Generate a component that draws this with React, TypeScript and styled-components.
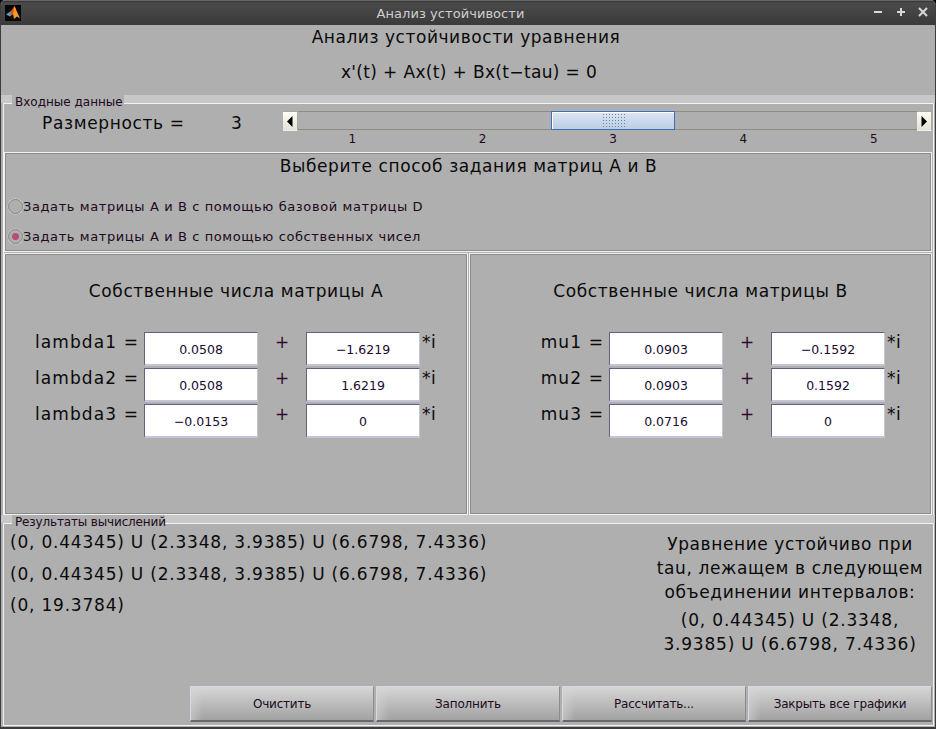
import styled, { createGlobalStyle } from "styled-components";

const GlobalStyle = createGlobalStyle`
  html, body {
    margin: 0;
    padding: 0;
    background: #000;
  }
  * {
    box-sizing: border-box;
  }
`;

const Window = styled.div`
  width: 936px;
  height: 729px;
  display: flex;
  flex-direction: column;
  overflow: hidden;
  background: #afafaf;
  border-radius: 5px 5px 0 0;
  font-family: "DejaVu Sans", Verdana, sans-serif;
  color: #0a0a0a;
  border-left: 1px solid #3c3c3c;
  border-right: 1px solid #3c3c3c;
  border-bottom: 2px solid #3c3c3c;
`;

const TitleBar = styled.div`
  height: 25px;
  flex: none;
  display: flex;
  align-items: center;
  justify-content: space-between;
  padding: 0 6px 0 4px;
  color: #cfcfcf;
  font-size: 13px;
  letter-spacing: 0.05px;
  background: linear-gradient(#333 0%, #4a4a4a 8%, #3a3a3a 100%);
  border-top: 1px solid #666;
`;

const TitleText = styled.span`
  flex: 1;
  text-align: center;
  margin-left: 10px;
`;

const TitleButtons = styled.div`
  display: flex;
  gap: 9px;
  margin-bottom: 3px;
`;

const Header = styled.div`
  height: 70px;
  flex: none;
  display: flex;
  flex-direction: column;
  align-items: center;
`;

const Title = styled.div`
  font-size: 17px;
  line-height: 22px;
  margin-top: 1px;
  margin-right: 4px;
  letter-spacing: 0.55px;
`;

const Formula = styled.div`
  font-size: 17px;
  line-height: 22px;
  margin-top: 13px;
  margin-left: 2px;
  letter-spacing: 0.35px;
`;

const Group = styled.div<{ $height: number }>`
  position: relative;
  height: ${({ $height }) => $height}px;
  flex: none;
  padding-top: 8px;
  background: linear-gradient(#c8c8c8 8px, transparent 8px);
`;

const Legend = styled.span<{ $width: number; $spacing: number }>`
  position: absolute;
  left: 11px;
  top: 0;
  z-index: 1;
  width: ${({ $width }) => $width}px;
  height: 14px;
  padding-left: 3px;
  background: #afafaf;
  font-size: 12px;
  line-height: 15px;
  color: #200a20;
  letter-spacing: ${({ $spacing }) => $spacing}px;
  white-space: nowrap;
`;

const GroupBody = styled.div`
  height: 100%;
  margin-left: 2px;
  margin-right: 1px;
  padding-right: 1px;
  border-top: 1px solid #f2f2f2;
  border-left: 1px solid #f2f2f2;
  border-right: 1px solid #f2f2f2;
  display: flex;
  flex-direction: column;
`;

const DimensionRow = styled.div`
  height: 48px;
  flex: none;
  display: flex;
`;

const DimLabel = styled.div`
  width: 142px;
  flex: none;
  margin-left: 38px;
  margin-top: 8px;
  font-size: 17px;
  line-height: 22px;
  letter-spacing: 0.65px;
  white-space: nowrap;
`;

const DimValue = styled.div`
  width: 52px;
  flex: none;
  margin-left: 47px;
  margin-top: 8px;
  font-size: 17px;
  line-height: 22px;
`;

const SliderColumn = styled.div`
  width: 649px;
  flex: none;
  margin-top: 7px;
`;

const Track = styled.div`
  height: 19px;
  display: flex;
  background: #afafaf;
  border-top: 1px solid #8d8d86;
  border-bottom: 1px solid #8d8d86;
`;

const ArrowButton = styled.div`
  width: 15px;
  margin: -1px 0 -2px;
  flex: none;
  display: flex;
  align-items: center;
  justify-content: center;
  background: linear-gradient(#fdfcf6, #e6e3d6);
  border-top: 1px solid #a9a9a2;
  border-right: 1px solid #a9a9a2;
  border-bottom: 1px solid #efefef;
`;

const TrackSpace = styled.div<{ $width: number }>`
  width: ${({ $width }) => $width}px;
  flex: none;
`;

const Thumb = styled.div`
  width: 124px;
  flex: none;
  margin: -1px 0;
  display: flex;
  align-items: center;
  justify-content: center;
  background: linear-gradient(#dce6f3, #bccde4);
  border: 1px solid #3a70b8;
  box-shadow: inset 1px 1px 0 #fff;
`;

const Grip = styled.div`
  width: 23px;
  height: 15px;
  background-image: radial-gradient(#6f83a5 0.8px, transparent 0.9px);
  background-size: 3px 3px;
`;

const Ticks = styled.div`
  display: grid;
  grid-template-columns: repeat(5, 130.4px);
  padding-left: 4px;
  margin-top: 2px;
  font-size: 12px;
  line-height: 15px;
  color: #200a20;
  text-align: center;
`;

const MethodFrame = styled.div`
  height: 100px;
  flex: none;
  margin: 0 0 1px;
  border: 1px solid #f2f2f2;
  box-shadow: inset 0 0 0 1px #8c8c8c;
  padding-top: 3px;
  display: flex;
  flex-direction: column;
`;

const MethodTitle = styled.div`
  font-size: 17px;
  line-height: 21px;
  text-align: center;
  letter-spacing: 0.58px;
  margin-left: 1px;
`;

const RadioRow = styled.div<{ $gap: number }>`
  display: flex;
  align-items: center;
  margin-top: ${({ $gap }) => $gap}px;
  margin-left: 3px;
  height: 16px;
  font-size: 13px;
  color: #200a20;
  letter-spacing: 0.6px;
`;

const Radio = styled.span<{ $checked?: boolean }>`
  width: 15px;
  height: 15px;
  flex: none;
  border-radius: 50%;
  border: 1px solid #8a8a8a;
  box-shadow: 0 0 0 0.5px #dcdcdc;
  display: flex;
  align-items: center;
  justify-content: center;

  &::after {
    content: "";
    width: 7px;
    height: 7px;
    border-radius: 50%;
    background: ${({ $checked }) => ($checked ? "#b84d78" : "transparent")};
  }
`;

const Panels = styled.div`
  height: 262px;
  flex: none;
  display: grid;
  grid-template-columns: 464px 463px;
  gap: 1px;
`;

const Panel = styled.div`
  border: 1px solid #f2f2f2;
  box-shadow: inset 0 0 0 1px #8c8c8c;
  display: flex;
  flex-direction: column;
`;

const PanelTitle = styled.div`
  margin-top: 26px;
  font-size: 17px;
  line-height: 22px;
  text-align: center;
  letter-spacing: 0.6px;
`;

const EigenRows = styled.div`
  margin-top: 30px;
  display: flex;
  flex-direction: column;
  gap: 2px;
`;

const EigenRow = styled.div`
  height: 34px;
  display: flex;
`;

const EigenLabel = styled.div`
  width: 139px;
  flex: none;
  padding-right: 5px;
  text-align: right;
  font-size: 17px;
  line-height: 20px;
  letter-spacing: 1.1px;
  white-space: nowrap;
`;

const ValueBox = styled.div`
  width: 114px;
  height: 34px;
  flex: none;
  display: flex;
  align-items: center;
  justify-content: center;
  padding-top: 1px;
  background: #fff;
  font-size: 12.5px;
  color: #200a30;
  border-top: 1px solid #62627a;
  border-left: 1px solid #62627a;
  border-right: 1px solid #c4c4d8;
  border-bottom: 2px solid #c4c4d8;
`;

const PlusSign = styled.div`
  width: 48px;
  flex: none;
  text-align: center;
  font-size: 17px;
  line-height: 20px;
  color: #300a30;
`;

const ImagUnit = styled.div`
  margin-left: 2px;
  font-size: 17px;
  line-height: 20px;
  letter-spacing: 0.6px;
`;

const ResultsBody = styled(GroupBody)`
  flex-direction: row;
  padding: 7px 3px 3px 6px;
  border-bottom: 1px solid #f2f2f2;
`;

const ResultColumn = styled.div`
  width: 639px;
  flex: none;
  display: flex;
  flex-direction: column;
  gap: 9.5px;
  font-size: 17px;
  line-height: 22px;
  letter-spacing: 0.79px;
`;

const Summary = styled.div`
  width: 280px;
  flex: none;
  margin-left: 1px;
  margin-top: 1px;
  text-align: center;
  font-size: 17px;
  line-height: 24px;
  letter-spacing: 0.6px;
  white-space: nowrap;
`;

const SummaryRange = styled.div`
  margin-top: 4px;
  letter-spacing: 0.8px;
`;

const ButtonBar = styled.div`
  position: absolute;
  right: 3px;
  bottom: 4px;
  display: flex;
  gap: 2px;
`;

const ActionButton = styled.button`
  width: 184px;
  height: 36px;
  padding: 0;
  font-family: inherit;
  font-size: 12px;
  letter-spacing: -0.2px;
  color: #200a20;
  background: linear-gradient(90deg, rgba(215, 215, 220, 0.5), transparent 12px),
    linear-gradient(#d6d6d6, #a2a2a2);
  border: 1px solid #8c8c8c;
  border-top-color: #d8d8e0;
  border-left-color: #d8d8e0;
  border-bottom: 2px solid #68686e;
`;

const Logo = () => (
  <svg width="16" height="16" viewBox="0 0 16 16">
    <rect width="16" height="16" fill="#050505" />
    <path d="M1 9.5 6 6 8 8 5 11.5z" fill="#4aa7c8" />
    <path d="M6 6 9.5 1 11 4 8.5 9 5 11.5z" fill="#d9541e" />
    <path d="M9.5 1 15 13.5 12 11.5 9 14 8 9z" fill="#f59a23" />
  </svg>
);

const MinimizeIcon = () => (
  <svg width="15" height="11" viewBox="0 0 15 11">
    <rect x="4" y="5" width="8" height="2" fill="#d8d8d8" />
  </svg>
);

const MaximizeIcon = () => (
  <svg width="14" height="11" viewBox="0 0 14 11">
    <path d="M3 5h3V2h2v3h3v2H8v3H6V7H3z" fill="#d8d8d8" />
  </svg>
);

const CloseIcon = () => (
  <svg width="12" height="11" viewBox="0 0 12 11">
    <path d="M2 2 10 10M10 2 2 10" stroke="#d8d8d8" strokeWidth="2" />
  </svg>
);

const ArrowIcon = ({ dir }: { dir: "left" | "right" }) => (
  <svg width="6" height="11" viewBox="0 0 6 11">
    <path d={dir === "left" ? "M5.5 0v11L0 5.5z" : "M.5 0v11L6 5.5z"} fill="#000" />
  </svg>
);

type Eigen = { name: string; re: string; im: string };

const lambdas: Eigen[] = [
  { name: "lambda1", re: "0.0508", im: "−1.6219" },
  { name: "lambda2", re: "0.0508", im: "1.6219" },
  { name: "lambda3", re: "−0.0153", im: "0" },
];

const mus: Eigen[] = [
  { name: "mu1", re: "0.0903", im: "−0.1592" },
  { name: "mu2", re: "0.0903", im: "0.1592" },
  { name: "mu3", re: "0.0716", im: "0" },
];

const EigenPanel = ({ title, rows }: { title: string; rows: Eigen[] }) => (
  <Panel>
    <PanelTitle>{title}</PanelTitle>
    <EigenRows>
      {rows.map((row) => (
        <EigenRow key={row.name}>
          <EigenLabel>{row.name} =</EigenLabel>
          <ValueBox>{row.re}</ValueBox>
          <PlusSign>+</PlusSign>
          <ValueBox>{row.im}</ValueBox>
          <ImagUnit>*i</ImagUnit>
        </EigenRow>
      ))}
    </EigenRows>
  </Panel>
);

const App = () => (
  <>
    <GlobalStyle />
    <Window>
      <TitleBar>
        <Logo />
        <TitleText>Анализ устойчивости</TitleText>
        <TitleButtons>
          <MinimizeIcon />
          <MaximizeIcon />
          <CloseIcon />
        </TitleButtons>
      </TitleBar>
      <Header>
        <Title>Анализ устойчивости уравнения</Title>
        <Formula>x'(t) + Ax(t) + Bx(t−tau) = 0</Formula>
      </Header>
      <Group $height={420}>
        <Legend $width={112} $spacing={0}>Входные данные</Legend>
        <GroupBody>
          <DimensionRow>
            <DimLabel>Размерность =</DimLabel>
            <DimValue>3</DimValue>
            <SliderColumn>
              <Track>
                <ArrowButton>
                  <ArrowIcon dir="left" />
                </ArrowButton>
                <TrackSpace $width={253} />
                <Thumb>
                  <Grip />
                </Thumb>
                <TrackSpace $width={242} />
                <ArrowButton>
                  <ArrowIcon dir="right" />
                </ArrowButton>
              </Track>
              <Ticks>
                <span>1</span>
                <span>2</span>
                <span>3</span>
                <span>4</span>
                <span>5</span>
              </Ticks>
            </SliderColumn>
          </DimensionRow>
          <MethodFrame>
            <MethodTitle>Выберите способ задания матриц A и B</MethodTitle>
            <RadioRow $gap={21}>
              <Radio />
              Задать матрицы A и B с помощью базовой матрицы D
            </RadioRow>
            <RadioRow $gap={14}>
              <Radio $checked />
              Задать матрицы A и B с помощью собственных чисел
            </RadioRow>
          </MethodFrame>
          <Panels>
            <EigenPanel title="Собственные числа матрицы A" rows={lambdas} />
            <EigenPanel title="Собственные числа матрицы B" rows={mus} />
          </Panels>
        </GroupBody>
      </Group>
      <Group $height={211}>
        <Legend $width={153} $spacing={-0.15}>Результаты вычислений</Legend>
        <ResultsBody>
          <ResultColumn>
            <div>(0, 0.44345) U (2.3348, 3.9385) U (6.6798, 7.4336)</div>
            <div>(0, 0.44345) U (2.3348, 3.9385) U (6.6798, 7.4336)</div>
            <div>(0, 19.3784)</div>
          </ResultColumn>
          <Summary>
            Уравнение устойчиво при
            <br />
            tau, лежащем в следующем
            <br />
            объединении интервалов:
            <SummaryRange>
              (0, 0.44345) U (2.3348,
              <br />
              3.9385) U (6.6798, 7.4336)
            </SummaryRange>
          </Summary>
        </ResultsBody>
        <ButtonBar>
          <ActionButton>Очистить</ActionButton>
          <ActionButton>Заполнить</ActionButton>
          <ActionButton>Рассчитать...</ActionButton>
          <ActionButton>Закрыть все графики</ActionButton>
        </ButtonBar>
      </Group>
    </Window>
  </>
);

export default App;
